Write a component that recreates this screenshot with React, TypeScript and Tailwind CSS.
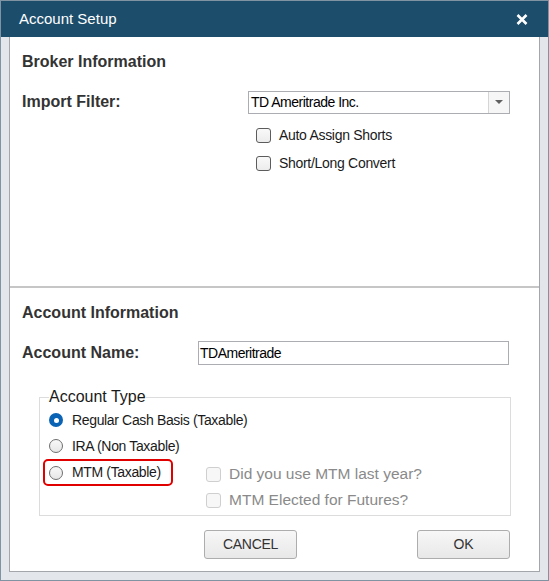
import React from "react";

const font = { fontFamily: '"Liberation Sans", Arial, sans-serif' };

function Checkbox({ label, disabled }: { label: string; disabled?: boolean }) {
  return (
    <div className="flex h-[20px] items-center">
      <span
        className={
          "block h-[15px] w-[15px] rounded-[3px] border " +
          (disabled ? "border-[#cfcfcf] bg-[#f7f7f7]" : "border-[#5c5c5c] bg-gradient-to-b from-[#f9f9f9] to-[#ececec]")
        }
      />
      <span
        className={
          disabled
            ? "ml-[8px] text-[15.5px] text-[#8a8a8a]"
            : "ml-[8px] text-[14px] tracking-[-0.3px] text-[#1a1a1a]"
        }
      >
        {label}
      </span>
    </div>
  );
}

function Radio({ label, checked }: { label: string; checked?: boolean }) {
  return (
    <div className="flex h-[20px] items-center">
      {checked ? (
        <span className="flex h-[14px] w-[14px] items-center justify-center rounded-full bg-[#0a63b5]">
          <span className="block h-[5px] w-[5px] rounded-full bg-white" />
        </span>
      ) : (
        <span className="block h-[14px] w-[14px] rounded-full border border-[#6e6e6e] bg-gradient-to-b from-[#f8f8f8] to-[#e6e6e6]" />
      )}
      <span className="ml-[9px] text-[14px] tracking-[-0.35px] text-[#1a1a1a]">{label}</span>
    </div>
  );
}

export default function App() {
  return (
    <div
      className="flex h-[581px] w-[549px] flex-col border border-[#7f93a2] bg-[#e3e6ea]"
      style={font}
    >
      {/* Title bar */}
      <div className="flex h-[36px] shrink-0 items-center justify-between bg-[#1c4d6a] pl-[18px] pr-[20px]">
        <span className="text-[15px] text-white">Account Setup</span>
        <svg width="12" height="11" viewBox="0 0 12 11">
          <path d="M1.5 1 L10.5 10 M10.5 1 L1.5 10" stroke="white" strokeWidth="2.6" strokeLinecap="butt" />
        </svg>
      </div>

      {/* Body */}
      <div className="flex flex-1 px-[8px] pb-[8px]">
        <div className="flex flex-1 flex-col border-x border-b border-[#a3a6aa] bg-white">
          {/* Broker section */}
          <div className="h-[251px] border-b-2 border-[#c6c6c6] pl-[12px] pt-[15px]">
            <div className="h-[20px] text-[16px] font-bold leading-[20px] text-[#333]">Broker Information</div>
            <div className="mt-[18px] flex items-center">
              <div className="w-[226px] text-[16px] font-bold text-[#333]">Import Filter:</div>
              <div className="flex h-[23px] w-[262px] items-stretch border border-[#abadb3] bg-white">
                <div className="flex flex-1 items-center pl-[2px] text-[14px] tracking-[-0.5px] text-black">
                  TD Ameritrade Inc.
                </div>
                <div className="flex w-[21px] items-center justify-center border-l border-[#d5d5d5] bg-[#f6f6f6]">
                  <svg width="8" height="4" viewBox="0 0 8 4">
                    <path d="M0 0 L8 0 L4 4 Z" fill="#606060" />
                  </svg>
                </div>
              </div>
            </div>
            <div className="ml-[234px] mt-[11px] flex flex-col gap-[8px]">
              <Checkbox label="Auto Assign Shorts" />
              <Checkbox label="Short/Long Convert" />
            </div>
          </div>

          {/* Account section */}
          <div className="flex-1 pl-[12px] pt-[15px]">
            <div className="h-[20px] text-[16px] font-bold leading-[20px] text-[#333]">Account Information</div>
            <div className="mt-[18px] flex items-center">
              <div className="w-[176px] text-[16px] font-bold text-[#333]">Account Name:</div>
              <div className="flex h-[24px] w-[311px] items-center border border-[#abadb3] pl-[1px] text-[14px] tracking-[-0.5px] text-black">
                TDAmeritrade
              </div>
            </div>

            <fieldset className="ml-[17px] mt-[22px] w-[472px] border border-[#dcdcdc] pb-[5px] pl-[9px]">
              <legend className="h-[20px] text-[16px] leading-[20px] text-[#1a1a1a]">Account Type</legend>
              <div className="mt-[3px]">
                <Radio label="Regular Cash Basis (Taxable)" checked />
              </div>
              <div className="mt-[6px]">
                <Radio label="IRA (Non Taxable)" />
              </div>
              <div className="mt-[3px] flex items-start">
                <div className="-ml-[6px] flex h-[27px] w-[130px] items-center rounded-[5px] border-2 border-[#e00000] pl-[4px]">
                  <Radio label="MTM (Taxable)" />
                </div>
                <div className="ml-[33px] mt-[5px] flex flex-col gap-[6px]">
                  <Checkbox label="Did you use MTM last year?" disabled />
                  <Checkbox label="MTM Elected for Futures?" disabled />
                </div>
              </div>
            </fieldset>

            <div className="ml-[182px] mt-[14px] flex w-[306px] justify-between">
              <button className="h-[29px] w-[93px] rounded-[3px] border border-[#adadad] bg-gradient-to-b from-[#f7f7f7] to-[#e8e8e8] text-[14px] tracking-[-0.3px] text-[#333]">
                CANCEL
              </button>
              <button className="h-[29px] w-[93px] rounded-[3px] border border-[#adadad] bg-gradient-to-b from-[#f7f7f7] to-[#e8e8e8] text-[14px] text-[#333]">
                OK
              </button>
            </div>
          </div>
        </div>
      </div>
    </div>
  );
}
